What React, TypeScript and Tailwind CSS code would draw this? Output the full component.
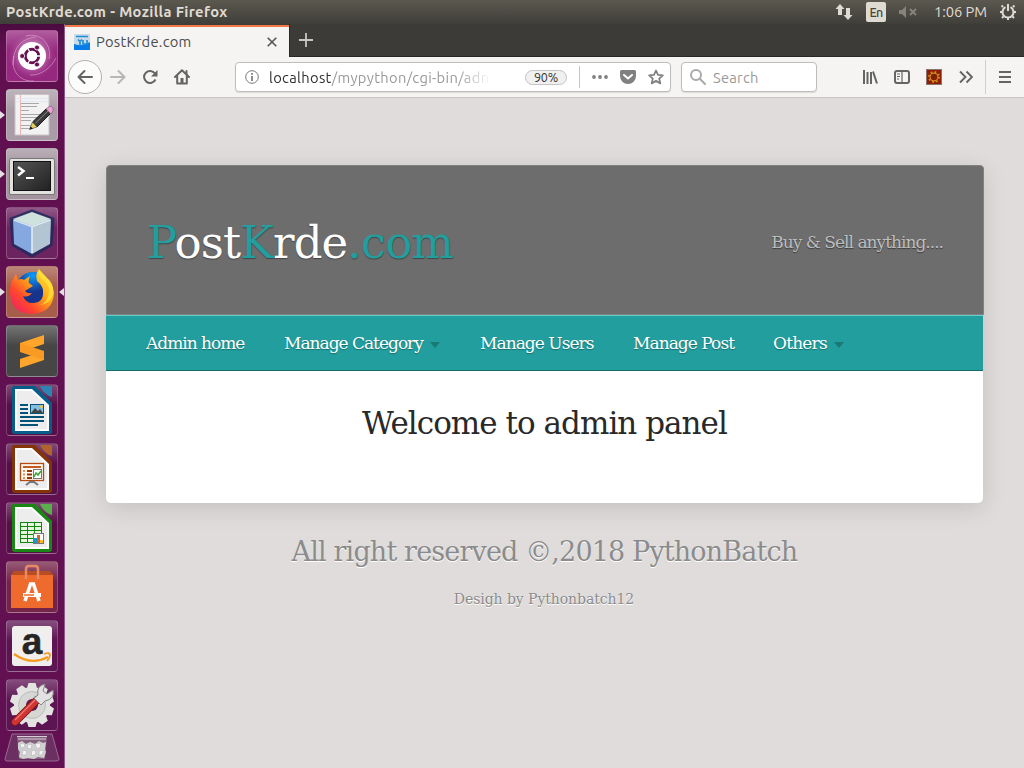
import type { ReactNode } from "react";

const UI = "font-['Ubuntu','Noto_Sans',sans-serif]";

function Tile({ className, children, left, right }: { className: string; children: ReactNode; left?: boolean; right?: boolean }) {
  return (
    <div className={`relative h-[52px] w-[52px] shrink-0 rounded-[4px] ${className}`}>
      <div className="absolute inset-0 rounded-[4px] border border-white/20 bg-linear-to-b from-white/25 to-transparent to-40%" />
      <svg viewBox="0 0 52 52" className="relative block h-[52px] w-[52px]">{children}</svg>
      {left && <svg viewBox="0 0 5 8" className="absolute top-[22px] -left-[6px] h-2 w-[5px]"><path d="M0 0L5 4L0 8Z" fill="#e6dfe4" /></svg>}
      {right && <svg viewBox="0 0 5 8" className="absolute top-[22px] -right-[6px] h-2 w-[5px]"><path d="M5 0L0 4L5 8Z" fill="#e6dfe4" /></svg>}
    </div>
  );
}

function DocShape({ frame, corner }: { frame: string; corner: string }) {
  return (
    <>
      <path d="M8 2H29L46 19V47a3 3 0 0 1-3 3H9a3 3 0 0 1-3-3V4a2 2 0 0 1 2-2Z" fill={frame} />
      <path d="M35 2H45a1 1 0 0 1 1 1V13Q38 11 34 2Z" fill={corner} />
      <path d="M9 5H26L43 21V47H9Z" fill="#fcfcfc" />
      <path d="M11 7H25L41 22V45H11Z" fill="#ededed" />
    </>
  );
}

function Launcher() {
  return (
    <aside className="flex h-[744px] w-[65px] shrink-0 flex-col items-start gap-[7px] border-r border-[#8c5a82] bg-linear-to-b from-[#4a0b40] via-[#60104f] via-3% to-[#621052] pt-[6px] pl-[6px]">
      <Tile className="bg-[#96297f]">
        <defs>
          <radialGradient id="swirl"><stop offset=".5" stopColor="#d692c8" /><stop offset="1" stopColor="#9a2c84" stopOpacity="0" /></radialGradient>
        </defs>
        <circle cx="26" cy="25" r="25" fill="url(#swirl)" opacity=".6" />
        <path d="M20 6C36 2 46 16 43 29M8 26C4 42 15 52 28 51M7 35C7 20 13 9 30 7M24 45C36 46 46 36 50 28" fill="none" stroke="#e2b5d8" strokeWidth=".9" opacity=".6" />
        <circle cx="26" cy="26" r="14" fill="#fff" />
        <circle cx="26" cy="26" r="6.700" fill="none" stroke="#681052" strokeWidth="3" />
        <path d="M26 26H36M26 26L21 17M26 26L21 35" stroke="#fff" strokeWidth="1.300" />
        <circle cx="26" cy="26" r="5.200" fill="#fff" />
        <g fill="#681052" stroke="#fff" strokeWidth=".8"><circle cx="16.200" cy="26" r="2.500" /><circle cx="31" cy="17.500" r="2.500" /><circle cx="31" cy="34.500" r="2.500" /></g>
      </Tile>
      <Tile className="bg-[#aa9ca7]" left>
        <path d="M9 5.500H43V46H9Z" fill="#f3f2f2" stroke="#c9c5c7" />
        <path d="M14.500 6V46" stroke="#f0b4b4" />
        <path d="M10 9.500H42M10 12.500H42" stroke="#dde5f0" strokeWidth=".8" />
        <path d="M15 14.500H33M15 17.500H31M15 21.500H23M15 25.500H34M15 28.500H32M15 31.500H25M15 36.500H25M15 39.500H23" stroke="#a8a8a8" strokeWidth="1.200" />
        <path d="M26.500 33L40 20L45 24L31 38Z" fill="#3b3b3b" stroke="#1d1d1d" />
        <path d="M29.500 34L42 22" stroke="#888" />
        <path d="M23.500 40.500L26.500 33L31 38Z" fill="#e8cf60" stroke="#554" strokeWidth=".7" />
        <path d="M23.500 40.500L24.500 37.500L27 39.500Z" fill="#111" />
        <path d="M40 20L44 17Q48 18 47 22L45 25Z" fill="#e7a4d0" stroke="#8e5a80" strokeWidth=".8" />
      </Tile>
      <Tile className="bg-[#a3949f]" left>
        <defs><linearGradient id="term" x2="1" y2="1"><stop stopColor="#555" /><stop offset="1" stopColor="#202120" /></linearGradient></defs>
        <rect x="3.500" y="10.500" width="45" height="36" rx="1.500" fill="#e2e2de" stroke="#777" />
        <rect x="7.500" y="13.500" width="37" height="29" fill="url(#term)" stroke="#111" />
        <path d="M12 19L17.500 23L12 27.500" fill="none" stroke="#fff" strokeWidth="2.500" />
        <path d="M20 30H28" stroke="#fff" strokeWidth="2" />
      </Tile>
      <Tile className="bg-[#6c2360]">
        <path d="M26 4L47 12L45 38L26 49L7 38L5 12Z" fill="#172a5b" stroke="#172a5b" strokeWidth="3" strokeLinejoin="round" opacity=".75" />
        <path d="M26 5L45 12L26 19L7 12Z" fill="#d0e2de" />
        <path d="M7 12L26 19V47L8 37Z" fill="#86a8e0" />
        <path d="M45 12L26 19V47L44 37Z" fill="#b3c4d2" />
        <path d="M8 13L26 19.500L44 13M26 20V46" fill="none" stroke="#e7f1fa" strokeWidth="1.800" opacity=".8" />
      </Tile>
      <Tile className="bg-[#a65e4b]" left right>
        <defs>
          <linearGradient id="fox" x1="1" x2="0" y1="0" y2="1"><stop stopColor="#fff14a" /><stop offset=".4" stopColor="#ffab16" /><stop offset=".68" stopColor="#ff472d" /><stop offset="1" stopColor="#ed1473" /></linearGradient>
          <radialGradient id="globe" cy=".1"><stop stopColor="#0a9dfd" /><stop offset="1" stopColor="#17338b" /></radialGradient>
        </defs>
        <circle cx="27" cy="23" r="17" fill="url(#globe)" />
        <path d="M6 15L10 8L12 14Q15 12 18 14L24 10Q22 15 23 17L27 20L22 23L19 25Q21 28 26 27Q22 32 17 30Q20 38 28 37Q38 36 37 25Q37 20 31 15Q29 8 33 3Q36 7 41 12Q47 17 48 27Q47 46 27 48Q5 48 4 27Q4 19 6 15Z" fill="url(#fox)" />
        <path d="M33 4Q31 10 38 15Q46 21 42 31Q39 38 33 39Q47 38 47 24Q47 17 41 12Z" fill="#ffe53e" opacity=".7" />
      </Tile>
      <Tile className="bg-[#464646]">
        <path d="M14 18L38 10V19L14 27Z" fill="#ffa52b" />
        <path d="M14 34L38 26V35L14 43Z" fill="#ffa52b" />
        <path d="M14 18V27L38 35V26Z" fill="#f99b22" />
      </Tile>
      <Tile className="bg-[#571047]">
        <DocShape frame="#075d89" corner="#2b84b4" />
        <path d="M14 21H22M14 25H22M14 29H22M14 33H38M14 37H38M14 41H32" stroke="#075277" strokeWidth="2" />
        <rect x="24.500" y="20.500" width="13" height="9" fill="#82bfe4" stroke="#075277" /><path d="M25 29L29 24L32 27L34 25L37 29Z" fill="#444" /><circle cx="35.500" cy="22.500" r="1.500" fill="#f7c33e" />
      </Tile>
      <Tile className="bg-[#571047]">
        <DocShape frame="#853408" corner="#b0622f" />
        <rect x="14.500" y="20.500" width="23" height="17" fill="#fff8f0" stroke="#b44b15" strokeWidth="1.300" />
        <path d="M17 24H35" stroke="#c65b20" strokeWidth="2" /><path d="M17 28H19M17 31.500H19M17 35H19" stroke="#df905b" strokeWidth="2" /><path d="M21 28H26M21 31.500H26M21 35H26" stroke="#92360b" strokeWidth="2" />
        <rect x="27.500" y="26.500" width="8" height="9" fill="#fff" stroke="#777" /><path d="M28 34L30 30L32 32L35 28" fill="none" stroke="#36a332" strokeWidth="1.500" /><path d="M26 38V40M20 42L24 39H28L32 42" fill="none" stroke="#777" strokeWidth="2" />
      </Tile>
      <Tile className="bg-[#571047]">
        <DocShape frame="#198713" corner="#5aae4c" />
        <rect x="14" y="20" width="22" height="21" fill="#138316" />
        <g fill="#e6f7dc">{[21, 25, 29, 33, 37].map((y) => [15, 22, 29].map((x) => <rect key={x + "-" + y} x={x} y={y} width="6" height="3" />))}</g>
        <rect x="27.500" y="31.500" width="10" height="10" fill="#fff" stroke="#777" /><path d="M29.500 41V36" stroke="#1a95d1" strokeWidth="3" /><path d="M32.500 41V33" stroke="#d66621" strokeWidth="3" /><path d="M35.500 41V38" stroke="#f2bd22" strokeWidth="3" />
      </Tile>
      <Tile className="bg-[#742448]">
        <path d="M5 14L8 10H44L47 14Z" fill="#b74d22" /><path d="M5 14H47V47H5Z" fill="#ee6b2d" />
        <path d="M20 18V8Q20 5 23 5H29Q32 5 32 8V18" fill="none" stroke="#e78a65" strokeWidth="2.500" />
        <path d="M19 40L24.500 23H27.500L33 40" fill="none" stroke="#fff" strokeWidth="3.500" /><path d="M17 34H35" stroke="#fff" strokeWidth="4" /><path d="M18 34H28" stroke="#ee6b2d" strokeWidth="1.500" />
      </Tile>
      <Tile className="bg-[#5d1452]">
        <rect x="6" y="6" width="40" height="40" rx="3" fill="#f0efed" />
        <text x="26" y="34" textAnchor="middle" fontFamily="Liberation Sans" fontWeight="700" fontSize="37" fill="#252525" stroke="#252525" strokeWidth=".5">a</text>
        <path d="M8 34Q25 46 42 37" fill="none" stroke="#f59b22" strokeWidth="2.300" /><path d="M38 34Q44 32 44 35Q44 38 41 41" fill="none" stroke="#f59b22" strokeWidth="1.800" />
      </Tile>
      <Tile className="bg-[#5d1452]">
        <g transform="translate(26 26)" fill="#e3e3e1">{[0, 36, 72, 108, 144].map((a) => <path key={a} transform={`rotate(${a})`} d="M-5 -17L-3.500 -22H3.500L5 -17V17L3.500 22H-3.500L-5 17Z" />)}<circle r="18" /></g>
        <circle cx="26" cy="26" r="13.500" fill="#d6d6d5" stroke="#bdbdbc" /><circle cx="26" cy="26" r="6" fill="#671852" />
        <path d="M9 43L31 21" stroke="#7c1515" strokeWidth="8" strokeLinecap="round" /><path d="M9 43L31 21" stroke="#cf3532" strokeWidth="6.200" strokeLinecap="round" /><path d="M9 41L29 21" stroke="#ef7771" strokeWidth="1.200" />
        <path d="M28 19L32 16Q30 7 39 5L37 12L41 15L47 11Q49 20 39 22L35 26Z" fill="#e2e2e2" stroke="#888" />
      </Tile>
      <svg viewBox="0 0 56 30" className="-mt-[5px] -ml-[2px] h-[30px] w-[56px] shrink-0">
        <path d="M8 1H48L55 26Q55 28 52 28H3Q1 28 1 26Z" fill="#6b2f61" stroke="#996a91" />
        <path d="M13 4L15 26H41L43 4Z" fill="#845f7e" />
        <path d="M13 3.500H43M14 6H42" stroke="#d6cdd4" />
        <path d="M14 10L18 8L22 11L26 9L31 11L35 8L39 10L42 9L41 16L42 19L40 25L34 24L30 26L24 25L19 26L15 24L16 19L14 16Z" fill="#d0d0d0" />
        <path d="M16 11L20 10L21 14L17 15ZM24 11L28 12L27 16L23 15ZM31 11L36 10L37 14L33 16ZM19 17L23 18L22 22L18 22ZM27 18L31 17L32 21L28 23ZM35 18L40 17L38 22L35 22Z" fill="#f3f3f3" stroke="#b2b2b2" strokeWidth=".6" />
      </svg>
    </aside>
  );
}

function TopPanel() {
  return (
    <header className={`flex h-6 shrink-0 items-center bg-linear-to-b from-[#5b594f] to-[#3f3e39] pr-[7px] pl-1.5 text-[#e0dbd2] ${UI}`}>
      <span className="text-[14.700px] leading-6 font-bold tracking-[0.370px] whitespace-nowrap">PostKrde.com - Mozilla Firefox</span>
      <div className="ml-auto flex h-6 items-center">
        <svg viewBox="0 0 18 18" className="h-[18px] w-[18px]" fill="#e0dbd2"><path d="M5 1L9.500 6H7V12H3V6H.5ZM13 17L8.500 12H11V5H15V12H17.500Z" /></svg>
        <span className="ml-[13px] flex h-5 w-5 items-center justify-center rounded-[2px] bg-[#e0dbd2] text-[12.500px] font-medium tracking-[-0.700px] text-[#45443e]">En</span>
        <svg viewBox="0 0 18 14" className="ml-[13px] h-[14px] w-[18px]" fill="#85837c"><path d="M0 5H3L7 1V13L3 9H0Z" /><path d="M11 4L17 10M17 4L11 10" stroke="#85837c" strokeWidth="2" /></svg>
        <span className="ml-[17px] w-[53px] text-[14.700px] leading-6 tracking-[-0.050px] whitespace-nowrap">1:06 PM</span>
        <svg viewBox="0 0 18 18" className="ml-[12px] h-[18px] w-[18px]" fill="none" stroke="#e0dbd2" strokeWidth="2"><path d="M6.500 4.200A5.500 5.500 0 1 0 11.500 4.200M9 1V8" /><path d="M4 4L2.500 2.500M14 4L15.500 2.500M3 9H1M15 9H17M4.500 13.500L3 15M13.500 13.500L15 15M9 15V17" /></svg>
      </div>
    </header>
  );
}

function TabBar() {
  return (
    <div className={`flex h-[33px] shrink-0 bg-[#3c3b37] ${UI}`}>
      <div className="mt-px flex w-[224px] items-center border-t-2 border-[#f07746] bg-[#f5f4f2] pb-px pl-[9px]">
        <svg viewBox="0 0 16 16" className="h-4 w-4"><rect width="16" height="16" fill="#c9dbe8" /><path d="M0 10Q8 13 16 8V16H0Z" fill="#087de8" /><path d="M2 2.500H14M4 5.500L6 7.500V11M6 7.500L8 5.500M9 6V10H13V6" fill="none" stroke="#218ed6" strokeWidth="1.700" /></svg>
        <span className="ml-[6px] text-[14.700px] leading-5 tracking-[0.280px] whitespace-nowrap text-[#4c4c4c]">PostKrde.com</span>
        <svg viewBox="0 0 10 10" className="mr-[12px] ml-auto h-[10px] w-[10px]"><path d="M.7 .7L9.300 9.300M9.300 .7L.7 9.300" stroke="#555" strokeWidth="1.600" /></svg>
      </div>
      <div className="flex flex-1 items-center border-b border-l border-[#292824] pl-[9px]">
        <svg viewBox="0 0 14 14" className="h-[14px] w-[14px]"><path d="M7 0V14M0 7H14" stroke="#c8c7c3" strokeWidth="1.800" /></svg>
      </div>
    </div>
  );
}

function NavBar() {
  return (
    <div className={`flex h-[41px] shrink-0 items-center border-b border-[#c6c3c1] bg-[#f5f4f2] ${UI}`}>
      <span className="ml-[3px] flex h-[34px] w-[34px] items-center justify-center rounded-full border border-[#b3b1ae] bg-[#fcfcfb]">
        <svg viewBox="0 0 16 16" className="h-4 w-4" fill="none" stroke="#646464" strokeWidth="2" strokeLinecap="round" strokeLinejoin="round"><path d="M15 8H1.500M7.500 2L1.500 8L7.500 14" /></svg>
      </span>
      <svg viewBox="0 0 16 16" className="ml-2 h-4 w-4" fill="none" stroke="#b7b6b4" strokeWidth="2" strokeLinecap="round" strokeLinejoin="round"><path d="M1 8H14.500M8.500 2L14.500 8L8.500 14" /></svg>
      <svg viewBox="0 0 16 16" className="ml-4 h-4 w-4" fill="none" stroke="#646464" strokeWidth="2"><path d="M13.500 10.500A6 6 0 1 1 13 4.500" /><path d="M15.500 1V7.500H9Z" fill="#646464" stroke="none" /></svg>
      <svg viewBox="0 0 16 16" className="ml-4 h-4 w-4" fill="none" stroke="#646464" strokeWidth="2" strokeLinecap="round" strokeLinejoin="round"><path d="M1 8L8 1.200L15 8M3.200 7V14.500H12.800V7" /><path d="M6.500 14V9H9.500V14Z" fill="#646464" stroke="none" /><path d="M12.500 2V5" /></svg>
      <div className="ml-[45px] flex h-[30px] w-[436px] items-center rounded-[4px] border border-[#bfbdba] bg-white shadow-[0_1px_1px_#dddbd8]">
        <svg viewBox="0 0 14 14" className="ml-[9px] h-[14px] w-[14px]" fill="none" stroke="#777"><circle cx="7" cy="7" r="6.300" /><path d="M7 6V11M7 3V4.800" strokeWidth="1.700" /></svg>
        <div className="ml-[10px] w-[222px] overflow-hidden pt-px text-[14.700px] leading-[20px] tracking-[0.330px] whitespace-nowrap [mask-image:linear-gradient(to_right,black_85%,transparent)]">
          <span className="text-[#303030]">localhost</span><span className="text-[#999]">/mypython/cgi-bin/adn</span>
        </div>
        <span className="ml-[34px] flex h-[15px] w-[42px] shrink-0 items-center justify-center rounded-full border border-[#c4c4c4] bg-[#f0f0f0] text-[12.500px] leading-none tracking-[-0.200px] text-[#333]">90%</span>
        <div className="ml-[12px] h-[22px] w-px shrink-0 bg-[#c5c5c5]" />
        <svg viewBox="0 0 16 4" className="ml-[12px] h-1 w-4 shrink-0" fill="#808080"><circle cx="2" cy="2" r="1.900" /><circle cx="8" cy="2" r="1.900" /><circle cx="14" cy="2" r="1.900" /></svg>
        <svg viewBox="0 0 16 14" className="ml-3 h-[14px] w-4 shrink-0"><path d="M1.500 0H14.500A1.500 1.500 0 0 1 16 1.500V6A8 8 0 0 1 0 6V1.500A1.500 1.500 0 0 1 1.500 0Z" fill="#808080" /><path d="M4 5L8 8.500L12 5" fill="none" stroke="#fff" strokeWidth="2" strokeLinecap="round" /></svg>
        <svg viewBox="0 0 16 16" className="ml-3 h-4 w-4 shrink-0"><path d="M8 1.500L10 5.900L14.800 6.400L11.200 9.600L12.300 14.400L8 11.900L3.700 14.400L4.800 9.600L1.200 6.400L6 5.900Z" fill="none" stroke="#808080" strokeWidth="1.800" strokeLinejoin="round" /></svg>
      </div>
      <div className="ml-[10px] flex h-[30px] w-[136px] items-center rounded-[4px] border border-[#bfbdba] bg-white shadow-[0_1px_1px_#dddbd8]">
        <svg viewBox="0 0 16 16" className="ml-2 h-4 w-4" fill="none" stroke="#aaa" strokeWidth="2"><circle cx="6" cy="6" r="5" /><path d="M9.800 9.800L15 15" strokeLinecap="round" /></svg>
        <span className="ml-[7px] pt-px text-[14.700px] leading-5 tracking-[0.250px] text-[#999]">Search</span>
      </div>
      <svg viewBox="0 0 16 14" className="ml-[45px] h-[14px] w-4" fill="none" stroke="#646464" strokeWidth="2"><path d="M2 0V14M5.500 2V14M9 2V14M11 1.500L15 13.500" /></svg>
      <svg viewBox="0 0 16 14" className="ml-[16px] h-[14px] w-4" fill="none" stroke="#646464" strokeWidth="2"><rect x="1" y="1" width="14" height="12" rx="2" /><path d="M8 1V13" strokeWidth="1.200" /><path d="M3 4H6M3 6.500H6M3 9H5" strokeWidth="1" /></svg>
      <svg viewBox="0 0 16 16" className="ml-[16px] h-4 w-4"><rect x=".5" y=".5" width="15" height="15" fill="#8e1e05" stroke="#8b746e" /><circle cx="8" cy="8" r="5" fill="none" stroke="#cf8d22" strokeWidth="2" strokeDasharray="1.600 2.330" /><circle cx="8" cy="8" r="3.900" fill="#812003" stroke="#cf8d22" strokeWidth="1.200" /></svg>
      <svg viewBox="0 0 14 14" className="ml-[17px] h-[14px] w-[14px]" fill="none" stroke="#646464" strokeWidth="1.900"><path d="M1 1.500L6.500 7L1 12.500M7.500 1.500L13 7L7.500 12.500" /></svg>
      <div className="ml-[12px] h-[34px] w-px bg-[#d1cfcc]" />
      <svg viewBox="0 0 12 12" className="ml-[13px] h-3 w-3"><path d="M0 1H12M0 6H12M0 11H12" stroke="#646464" strokeWidth="2" /></svg>
    </div>
  );
}

const Arrow = () => <svg viewBox="0 0 10 6" className="absolute top-[11px] -right-[17px] h-[6px] w-[10px]"><path d="M0 0H10L5 6Z" fill="#1b7877" /></svg>;

function Site() {
  return (
    <main className="flex flex-1 flex-col bg-[#dfdcdb] pt-[67px] pl-[41px] font-['DejaVu_Serif',serif]">
      <div className="h-[338px] w-[877px] rounded-[5px] bg-white shadow-[0_5px_23px_rgba(0,0,0,0.13)]">
        <div className="flex h-[150px] w-[878px] items-center justify-between rounded-t-[4px] border border-[#818181] bg-[#6d6d6d] pr-[40px] pl-[40px]">
          <h1 className="pt-[5px] text-[45px] leading-none tracking-[-0.870px] whitespace-nowrap text-white [text-shadow:0_1px_1px_#444]">
            <span className="text-[#219e9d]">P</span>ost<span className="text-[#219e9d]">K</span>rde<span className="text-[#219e9d]">.com</span>
          </h1>
          <p className="pt-[5px] text-[17px] tracking-[-0.980px] whitespace-nowrap text-[#bdbdbd] [text-shadow:0_1px_1px_#3b3b3b]">Buy &amp; Sell anything....</p>
        </div>
        <nav className="flex h-[56px] items-center border-t border-b border-t-[#65cccc] border-b-[#176d6c] bg-[#219e9d] pl-[40px] text-[17px] leading-6 tracking-[-1px] whitespace-nowrap text-white [text-shadow:0_1px_1px_#176d6c]">
          <a className="w-[138px]">Admin home</a>
          <div className="w-[196px]"><a className="relative inline-block">Manage Category<Arrow /></a></div>
          <a className="w-[153px] tracking-[-0.950px]">Manage Users</a>
          <a className="w-[140px] tracking-[-0.950px]">Manage Post</a>
          <a className="relative tracking-[-0.800px]">Others<Arrow /></a>
        </nav>
        <h2 className="pt-[32px] text-center text-[31px] leading-[40px] tracking-[-0.970px] text-[#292929]">Welcome to admin panel</h2>
      </div>
      <footer className="w-[877px] pt-[30px] text-center text-[#8b8b8b] [text-shadow:0_1px_0_#fff]">
        <p className="text-[27px] leading-[38px] tracking-[-0.850px]">All right reserved ©,2018 PythonBatch</p>
        <p className="mt-[17px] pr-px text-[14px] leading-[22px] tracking-[-0.070px]">Desigh by Pythonbatch12</p>
      </footer>
    </main>
  );
}

export default function App() {
  return (
    <div className="flex h-[768px] w-[1024px] flex-col overflow-hidden">
      <TopPanel />
      <div className="flex min-h-0 flex-1">
        <Launcher />
        <section className="flex min-w-0 flex-1 flex-col">
          <TabBar />
          <NavBar />
          <Site />
        </section>
      </div>
    </div>
  );
}
